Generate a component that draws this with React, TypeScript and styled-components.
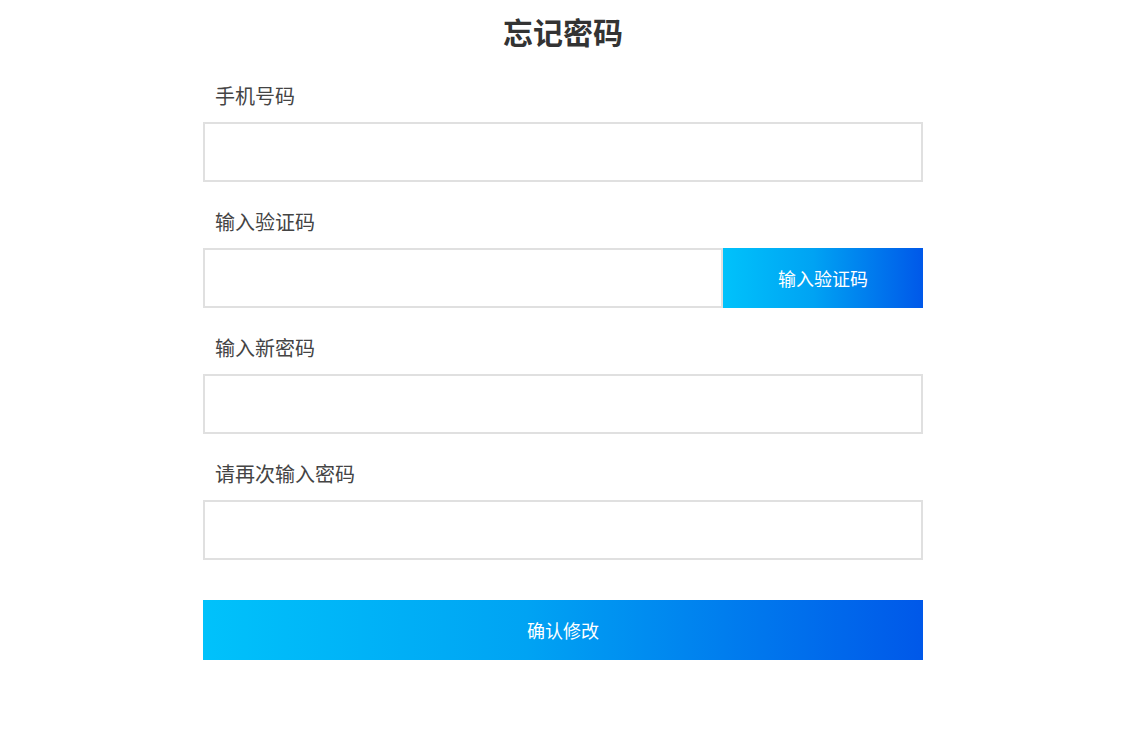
import React, { useState } from "react";
import styled, { createGlobalStyle } from "styled-components";

const GlobalStyle = createGlobalStyle`
  html, body {
    margin: 0;
    padding: 0;
    background: #fff;
    font-family: "Noto Sans CJK SC", "Liberation Sans", sans-serif;
  }
`;

const gradient = "linear-gradient(90deg, #00c2fb 0%, #00a3f3 45%, #0058e9 100%)";

const Page = styled.div`
  display: flex;
  justify-content: center;
  padding: 11px 19px 0 0;
`;

const Form = styled.form`
  width: 720px;
  display: flex;
  flex-direction: column;
`;

const Title = styled.h1`
  margin: 0 0 33px;
  font-size: 30px;
  line-height: 40px;
  font-weight: 700;
  color: #333;
  text-align: center;
`;

const Field = styled.div`
  display: flex;
  flex-direction: column;
  margin-bottom: 28px;

  &:last-of-type {
    margin-bottom: 40px;
  }
`;

const Label = styled.label`
  padding-left: 12px;
  margin-bottom: 14px;
  font-size: 20px;
  line-height: 24px;
  color: #444;
`;

const Row = styled.div`
  display: flex;

  & > input {
    flex: 1;
  }
`;

const Input = styled.input`
  display: block;
  width: 100%;
  min-width: 0;
  height: 60px;
  box-sizing: border-box;
  border: 2px solid #e0e0e0;
  outline: none;
  padding: 0 14px;
  font-size: 16px;
  font-family: inherit;
  color: #333;
`;

const GradientButton = styled.button<{ $width?: string }>`
  width: ${(p) => p.$width || "100%"};
  height: 60px;
  flex-shrink: 0;
  border: none;
  background: ${gradient};
  color: #fff;
  font-size: 18px;
  font-family: inherit;
  cursor: pointer;
`;

const App: React.FC = () => {
	const [phone, setPhone] = useState("");
	const [code, setCode] = useState("");
	const [pwd, setPwd] = useState("");
	const [pwd2, setPwd2] = useState("");

	return (
		<>
			<GlobalStyle />
			<Page>
				<Form onSubmit={(e) => e.preventDefault()}>
					<Title>忘记密码</Title>
					<Field>
						<Label>手机号码</Label>
						<Input value={phone} onChange={(e) => setPhone(e.target.value)} />
					</Field>
					<Field>
						<Label>输入验证码</Label>
						<Row>
							<Input value={code} onChange={(e) => setCode(e.target.value)} />
							<GradientButton type="button" $width="200px">
								输入验证码
							</GradientButton>
						</Row>
					</Field>
					<Field>
						<Label>输入新密码</Label>
						<Input type="password" value={pwd} onChange={(e) => setPwd(e.target.value)} />
					</Field>
					<Field>
						<Label>请再次输入密码</Label>
						<Input type="password" value={pwd2} onChange={(e) => setPwd2(e.target.value)} />
					</Field>
					<GradientButton type="submit">确认修改</GradientButton>
				</Form>
			</Page>
		</>
	);
};

export default App;
